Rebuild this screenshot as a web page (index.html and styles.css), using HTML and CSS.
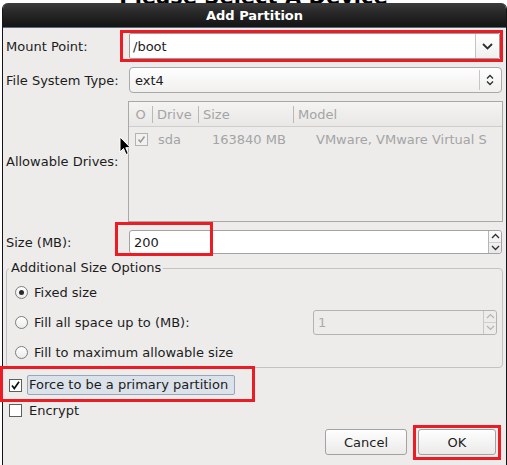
FILE: index.html
```html
<!DOCTYPE html>
<html>
<head>
<meta charset="utf-8">
<link rel="stylesheet" href="styles.css">
</head>
<body>
<div class="backdrop"><span>Please Select A Device</span></div>
<div class="dialog">
  <div class="titlebar">Add Partition</div>
  <div class="content">
    <div class="form">
      <label class="lbl">Mount Point:</label>
      <div class="combo-entry">
        <span class="val">/boot</span>
        <span class="dd">
          <svg width="11" height="7" viewBox="0 0 11 7"><path d="M1 1 L5.5 5.5 L10 1" fill="none" stroke="#2e2e2e" stroke-width="1.8"/></svg>
        </span>
      </div>

      <label class="lbl">File System Type:</label>
      <div class="combo-btn">
        <span class="val">ext4</span>
        <span class="sep"></span>
        <svg class="updown" width="8" height="12" viewBox="0 0 8 12"><path d="M1 4.5 L4 1.5 L7 4.5 M1 7.5 L4 10.5 L7 7.5" fill="none" stroke="#2e2e2e" stroke-width="1.3"/></svg>
      </div>

      <label class="lbl">Allowable Drives:</label>
      <div class="tree">
        <div class="tree-head">
          <span class="hc c0">O</span>
          <span class="hc c1">Drive</span>
          <span class="hc c2">Size</span>
          <span class="hc c3">Model</span>
        </div>
        <div class="tree-row">
          <span class="tcheck">
            <svg width="11" height="11" viewBox="0 0 11 11"><path d="M2.5 5.5 L4.5 8 L8.5 2.5" fill="none" stroke="#9a9a9a" stroke-width="1.5"/></svg>
          </span>
          <span class="rc r1">sda</span>
          <span class="rc r2">163840 MB</span>
          <span class="rc r3">VMware, VMware Virtual S</span>
        </div>
      </div>

      <label class="lbl">Size (MB):</label>
      <div class="spin">
        <span class="val">200</span>
        <span class="spin-btns">
          <span class="sb"><svg width="9" height="6" viewBox="0 0 9 6"><path d="M1 5 L4.5 1.5 L8 5" fill="none" stroke="#2e2e2e" stroke-width="1.3"/></svg></span>
          <span class="sb"><svg width="9" height="6" viewBox="0 0 9 6"><path d="M1 1 L4.5 4.5 L8 1" fill="none" stroke="#2e2e2e" stroke-width="1.3"/></svg></span>
        </span>
      </div>
    </div>

    <fieldset class="frame">
      <legend>Additional Size Options</legend>
      <div class="opt"><span class="radio checked"></span><span>Fixed size</span></div>
      <div class="opt"><span class="radio"></span><span>Fill all space up to (MB):</span>
        <div class="spin disabled">
          <span class="val">1</span>
          <span class="spin-btns">
            <span class="sb"><svg width="9" height="6" viewBox="0 0 9 6"><path d="M1 5 L4.5 1.5 L8 5" fill="none" stroke="#b4b4b4" stroke-width="1.2"/></svg></span>
            <span class="sb"><svg width="9" height="6" viewBox="0 0 9 6"><path d="M1 1 L4.5 4.5 L8 1" fill="none" stroke="#b4b4b4" stroke-width="1.2"/></svg></span>
          </span>
        </div>
      </div>
      <div class="opt"><span class="radio"></span><span>Fill to maximum allowable size</span></div>
    </fieldset>

    <div class="check-row first">
      <span class="cbox">
        <svg width="11" height="11" viewBox="0 0 11 11"><path d="M2 5.5 L4.3 8.5 L9 1.8" fill="none" stroke="#111" stroke-width="1.7"/></svg>
      </span>
      <span class="focusbox">Force to be a primary partition</span>
    </div>
    <div class="check-row second">
      <span class="cbox"></span>
      <span class="ctext">Encrypt</span>
    </div>

    <div class="buttons">
      <button class="btn cancel">Cancel</button>
      <button class="btn ok">OK</button>
    </div>
  </div>
</div>

<div class="mark m-mount"></div>
<div class="mark m-size"></div>
<div class="mark m-force"></div>
<div class="mark m-ok"></div>

<svg class="cursor" width="13" height="20" viewBox="0 0 13 20">
  <path d="M1 1 L1 16 L4.5 12.5 L7 18.5 L9.3 17.5 L6.8 11.7 L11.5 11.7 Z" fill="#000" stroke="#fff" stroke-width="1" stroke-linejoin="miter"/>
</svg>
</body>
</html>
```
FILE: styles.css
```css
* { box-sizing: border-box; }
html, body { margin: 0; padding: 0; }
body {
  width: 507px;
  height: 465px;
  overflow: hidden;
  background: #ffffff;
  font-family: "DejaVu Sans", sans-serif;
  font-size: 13px;
  color: #1c1c1c;
  position: relative;
}

.backdrop {
  height: 3px;
  overflow: hidden;
  text-align: center;
}
.backdrop span {
  display: block;
  font-weight: bold;
  font-size: 21px;
  line-height: 21px;
  margin-top: -13px;
  color: #000;
}

.dialog {
  margin-left: 2px;
  width: 505px;
  height: 462px;
  background: #edeceb;
  border-left: 1px solid #151515;
  border-right: 1px solid #151515;
  border-radius: 6px 6px 0 0;
  overflow: hidden;
}

.titlebar {
  height: 25px;
  padding-top: 1px;
  line-height: 24px;
  background: linear-gradient(#3c3c3c, #2a2a2a 35%, #1a1a1a 80%, #141414);
  border-bottom: 1px solid #5b6a7e;
  color: #ffffff;
  font-weight: bold;
  text-align: center;
}

.content {
  padding: 5px 4px 0 3px;
}

.form {
  display: grid;
  grid-template-columns: 123px 373px;
  grid-template-rows: 26px 26px 121px 24px;
  row-gap: 8px;
  align-items: center;
}
.lbl { white-space: nowrap; }

.combo-entry {
  width: 371px;
  height: 26px;
  background: #fff;
  border: 1px solid #9c9c9c;
  border-radius: 2px;
  display: flex;
  align-items: center;
}
.combo-entry .val { flex: 1; padding-left: 3px; }
.combo-entry .dd {
  width: 24px;
  height: 100%;
  border-left: 1px solid #c4c4c4;
  display: flex;
  align-items: center;
  justify-content: center;
  background: linear-gradient(#ffffff, #f1f0ef);
}

.combo-btn {
  height: 26px;
  background: linear-gradient(#fefefe, #f1f0ef);
  border: 1px solid #a9a9a9;
  border-radius: 4px;
  display: flex;
  align-items: center;
}
.combo-btn .val { flex: 1; padding-left: 5px; }
.combo-btn .sep {
  width: 1px;
  height: 20px;
  background: #c6c5c4;
  margin-right: 6px;
}
.combo-btn .updown { margin-right: 7px; }

.tree {
  height: 121px;
  margin: 0 -1px;
  border: 1px solid #a8a8a8;
  background: #edeceb;
  color: #a4a4a4;
  align-self: start;
}
.tree-head {
  height: 25px;
  display: flex;
  align-items: center;
  background: linear-gradient(#f4f4f3, #e9e8e7);
  border-bottom: 1px solid #cfcecd;
}
.hc {
  height: 17px;
  line-height: 17px;
  padding-left: 4px;
  border-left: 1px solid #b9b9b9;
}
.c0 { width: 23px; border-left: 0; padding-left: 0; text-align: center; }
.c1 { width: 46px; }
.c2 { width: 95px; }
.c3 { flex: 1; }

.tree-row {
  height: 24px;
  display: flex;
  align-items: center;
}
.tcheck {
  width: 13px;
  height: 13px;
  margin-left: 6px;
  border: 1px solid #b3b3b3;
  background: #f2f1f0;
  display: flex;
  align-items: center;
  justify-content: center;
}
.rc { white-space: nowrap; }
.r1 { margin-left: 10px; width: 54px; }
.r2 { width: 104px; }
.r3 { flex: 1; }

.spin {
  height: 24px;
  background: #fff;
  border: 1px solid #a3a3a3;
  border-radius: 3px;
  display: flex;
  align-items: stretch;
}
.spin .val { flex: 1; padding-left: 4px; display: flex; align-items: center; }
.spin-btns {
  width: 13px;
  border-left: 1px solid #b5b5b5;
  display: flex;
  flex-direction: column;
  background: linear-gradient(#fbfbfb, #e9e8e7);
  border-radius: 0 3px 3px 0;
}
.sb {
  flex: 1;
  display: flex;
  align-items: center;
  justify-content: center;
}
.sb + .sb { border-top: 1px solid #cfcfcf; }

.frame {
  margin: 5px -1px 0 0;
  padding: 0 5px 0 8px;
  border: 1px solid #c3c2c1;
  border-radius: 4px;
  min-width: 0;
}
.frame legend {
  padding: 0 2px;
  margin-left: -6px;
  line-height: 18px;
}
.opt {
  height: 30px;
  display: flex;
  align-items: center;
}
.radio {
  width: 13px;
  height: 13px;
  border-radius: 50%;
  border: 1px solid #7d7d7d;
  background: linear-gradient(#ffffff, #ecebea);
  margin-right: 6px;
  display: flex;
  align-items: center;
  justify-content: center;
}
.radio.checked::after {
  content: "";
  width: 5px;
  height: 5px;
  border-radius: 50%;
  background: #2a2a2a;
}
.spin.disabled {
  margin-left: auto;
  width: 184px;
  height: 25px;
  background: #edeceb;
  border-color: #b3b3b3;
  color: #ababab;
}
.spin.disabled .val { padding-left: 4px; }
.spin.disabled .spin-btns { background: #edeceb; border-left-color: #c8c8c8; }

.check-row {
  height: 20px;
  display: flex;
  align-items: center;
  padding-left: 3px;
}
.check-row.first { margin-top: 7px; }
.check-row.second { margin-top: 5px; }
.cbox {
  width: 13px;
  height: 13px;
  border: 1px solid #5e5e5e;
  background: #ffffff;
  display: flex;
  align-items: center;
  justify-content: center;
}
.focusbox {
  margin-left: 5px;
  height: 20px;
  line-height: 18px;
  padding: 0 6px 0 1px;
  border: 1px solid #97a6b9;
  border-radius: 2px;
  background: #dbe2ea;
}
.ctext { margin-left: 7px; }

.buttons {
  margin-top: 9px;
  display: flex;
  justify-content: flex-end;
  gap: 11px;
  padding-right: 6px;
}
.btn {
  height: 26px;
  font-family: "DejaVu Sans", sans-serif;
  font-size: 13px;
  color: #1c1c1c;
  border: 1px solid #a2a2a2;
  border-radius: 3px;
  background: linear-gradient(#fefefe, #ebeae9);
  padding: 0;
}
.btn.cancel { width: 82px; }
.btn.ok { width: 78px; }

.mark {
  position: absolute;
  border: 3px solid #ec1c24;
}
.m-mount { left: 120px; top: 30px; width: 383px; height: 32px; }
.m-size { left: 115px; top: 222px; width: 98px; height: 34px; }
.m-force { left: 0; top: 366px; width: 255px; height: 36px; }
.m-ok { left: 413px; top: 425px; width: 88px; height: 35px; }

.cursor {
  position: absolute;
  left: 119px;
  top: 136px;
}
```
